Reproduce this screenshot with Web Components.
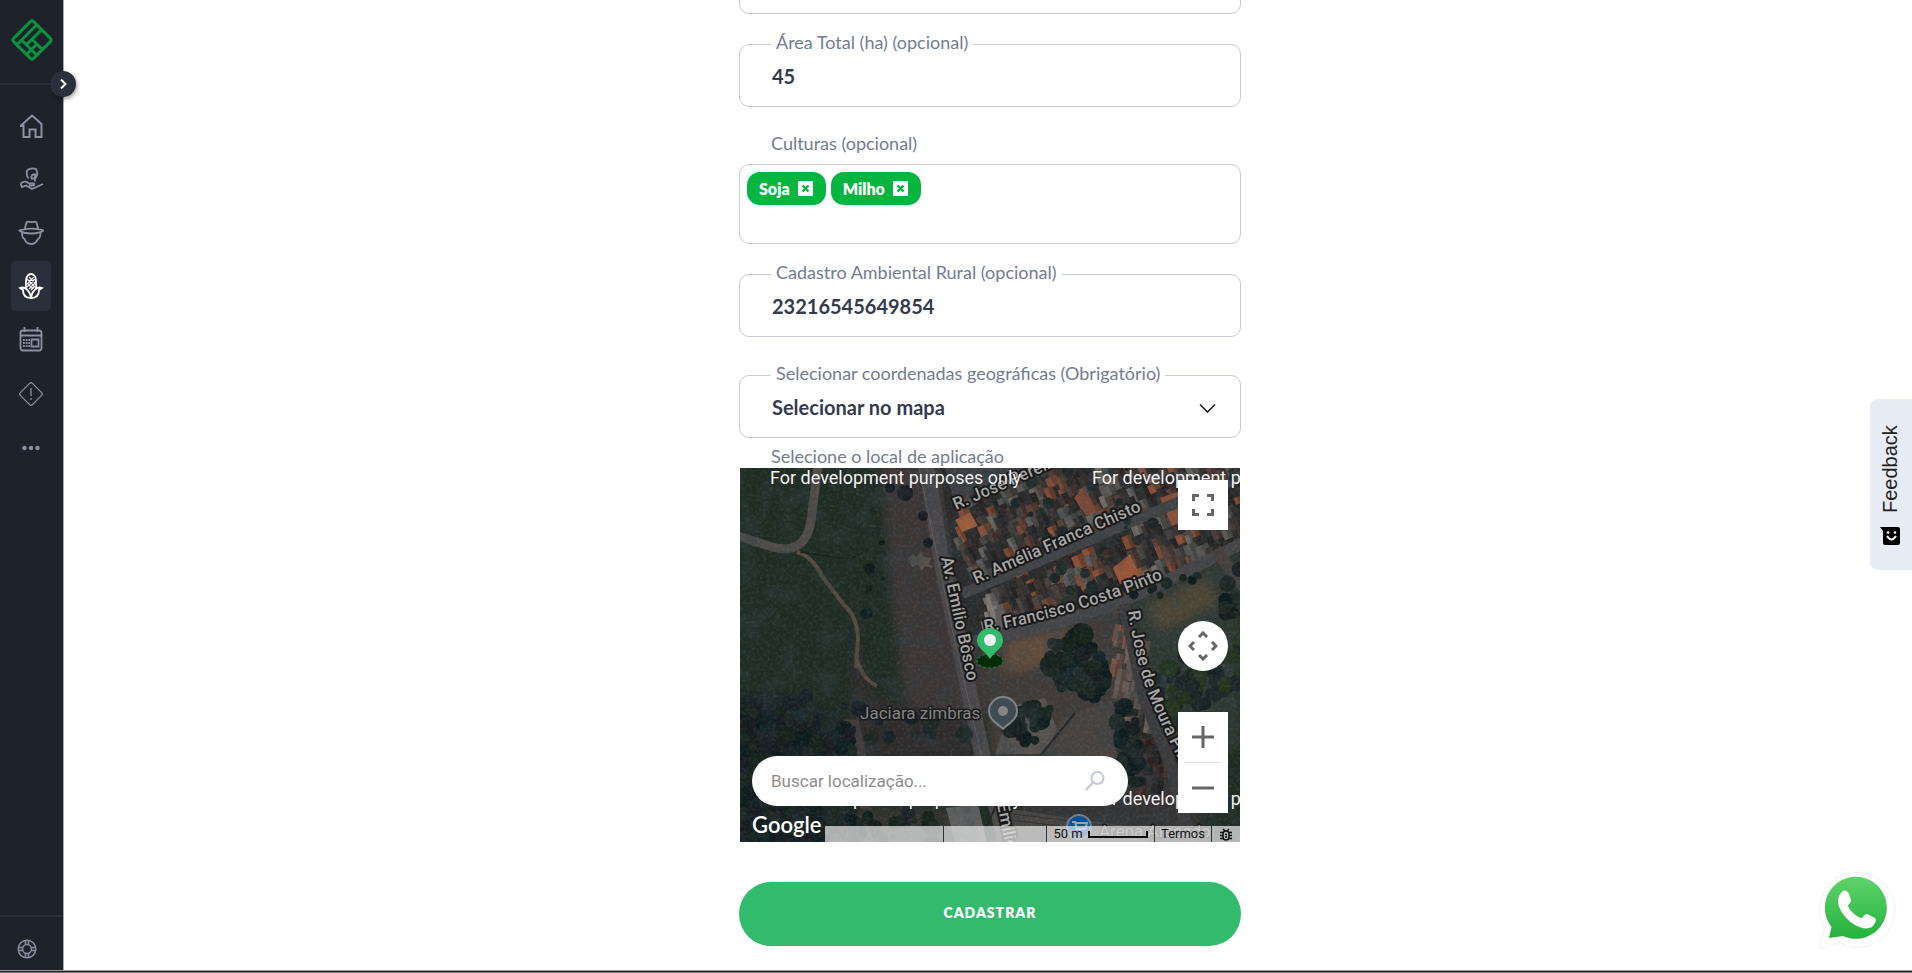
<!DOCTYPE html>
<html lang="pt-BR">
<head>
<meta charset="utf-8">
<meta name="viewport" content="width=device-width, initial-scale=1">
<title>Cadastro de propriedade</title>
<style>
  body { margin: 0; background: #fff; font-family: Lato, "Open Sans", sans-serif; color: #343b4f; }
</style>
</head>
<body>
<app-shell>
  <side-nav slot="nav"></side-nav>
  <property-form></property-form>
</app-shell>
<feedback-tab></feedback-tab>
<whatsapp-link></whatsapp-link>

<script>
const define = (name, html, setup) => {
  const tpl = document.createElement('template');
  tpl.innerHTML = '<style>*,*::before{box-sizing:border-box}</style>' + html;
  customElements.define(name, class extends HTMLElement {
    constructor() {
      super();
      this.attachShadow({ mode: 'open' }).append(tpl.content.cloneNode(true));
    }
    connectedCallback() { if (setup) setup(this, this.shadowRoot); }
  });
};

define('app-shell', `
<style>
  :host { display: grid; grid-template-columns: 64px 1fr; grid-template-rows: 1fr auto; height: 100vh; overflow: hidden; }
  main { padding-left: 4px; min-width: 0; overflow: hidden; }
  footer { grid-column: 1 / -1; height: 3px; background: #222; border-top: 1px solid #999; border-bottom: 1px solid #777; }
</style>
<slot name="nav"></slot>
<main><slot></slot></main>
<footer></footer>`);

define('nav-item', `
<style>
  :host { display: block; }
  a { display: grid; place-items: center; width: 40px; height: 50px; border-radius: 5px; color: #8b90a2; }
  :host([active]) a { background: #2b2f3b; color: #fff; }
  ::slotted(svg) { display: block; width: 26px; height: 30px; }
</style>
<a href="#"><slot></slot></a>`, (el, root) => {
  root.querySelector('a').setAttribute('aria-label', el.getAttribute('name'));
});

define('side-nav', `
<style>
  :host { display: flex; flex-direction: column; position: relative; z-index: 1; background: #1e222b; border-right: 1px solid #a5a7ab; }
  .logo { display: grid; place-items: center; height: 85px; padding: 0 0 3px; border-bottom: 2px solid #2a303d; }
  .logo svg { width: 44px; height: 44px; }
  nav { display: flex; flex-direction: column; gap: 4px; padding: 14px 11px; flex: 1; }
  .help { border-top: 2px solid #2a303d; height: 55px; padding: 22px 17px; color: #8b90a2; line-height: 0; }
  .help a { color: inherit; }
  .help svg { width: 20px; height: 20px; }
  button { position: absolute; right: -13px; top: 71px; width: 26px; height: 26px; padding: 0; border: 0; border-radius: 50%;
    background: #2b2f3b; box-shadow: 1px 2px 4px #0006; display: grid; place-items: center; }
  svg { fill: none; stroke: currentColor; stroke-width: 1.8; }
</style>
<a class="logo" href="#" aria-label="Início"><svg viewBox="0 0 42 42" style="stroke:#07943f;stroke-width:2.8;stroke-linejoin:round">
  <g transform="rotate(45 21 21)"><rect x="7.500" y="7.500" width="27" height="27" rx="2.500"/>
  <path d="M14 7.500V34.500M20.500 7.500V28M20.500 20.500H34.500M14 28H34.500M27 21V34.500"/></g></svg></a>
<nav aria-label="Menu">
  <nav-item name="Início"><svg viewBox="0 0 26 30" style="stroke-width:2"><path d="M2.500 17 14 6.500 18 10M18 10 23.500 15V28H17.500V20.500H11.500V28H5.500V15.500M2 17H6"/></svg></nav-item>
  <nav-item name="Cultivo"><svg viewBox="0 0 26 30"><path d="M10.500 15.500C8.500 13 8 8 9.500 7c2-1.500 6-2 8.500-1 2.500 4 1 8-1.500 10M17 18.500v-7c-3-.5-4 1.500-3.500 4h3M2.500 20.500c4-3 6-2 8.500 0h5c1 2-1 2.500-5 2M2.500 20.500 4 24l4-1.500 6 3.500 11-5"/></svg></nav-item>
  <nav-item name="Produtores"><svg viewBox="0 0 26 30"><path d="M6.500 13 8.500 5.500C10 3 12 6 13.500 5c2 1 3-2 5 .5L20.500 13M1.500 13.500c6-2.500 18-2.500 24 0-3 2.500-8 3-12 3s-9-.5-12-3zM4 16c0 3 .5 5 2.500 6 1 3 4 5 7 5s5-2 6.500-5c2-1 2.500-3 2.500-6"/></svg></nav-item>
  <nav-item name="Propriedades" active><svg viewBox="0 0 26 30"><path d="M8 17V10c0-4 2-7 5-7s5 3 5 7v7M13 27c-6 0-8-4-8-8l-3-2c5-2 10 3 11 9 1-6 6-11 11-9l-3 2c0 4-2 8-8 8M13 27V23"/><path d="m9 8 8 8M9 12l6 6M9 16l8-8M11 6l6 6M10 12l6-6M11 18l6-6M13 19l4-4" style="stroke-width:1.200"/></svg></nav-item>
  <nav-item name="Agenda"><svg viewBox="0 0 26 30"><rect x="2.500" y="5.500" width="21" height="20" rx="2.500"/><path d="M2.500 10.500h21M6.500 2v5M19.500 2v5M13.500 14.500h7v7h-7z"/><path d="M5 15h7M5 18h7M5 21h7" style="stroke-dasharray:1.800 .9"/></svg></nav-item>
  <nav-item name="Alertas"><svg viewBox="0 0 26 30" style="stroke-width:1.300"><rect x="4.500" y="6.500" width="17" height="17" rx="2" transform="rotate(45 13 15)"/><path d="M13 9v8M13 19v2"/></svg></nav-item>
  <nav-item name="Mais"><svg viewBox="0 0 26 30" style="fill:currentColor;stroke:none"><circle cx="6.500" cy="15" r="2.200"/><circle cx="13" cy="15" r="2.200"/><circle cx="19.500" cy="15" r="2.200"/></svg></nav-item>
</nav>
<div class="help"><a href="#" aria-label="Ajuda"><svg viewBox="0 0 20 20" style="stroke-width:1.500"><circle cx="10" cy="10" r="8.800"/><circle cx="10" cy="10" r="4.500"/><path d="M8.500 1.500v4M11.500 1.500v4M8.500 14.500v4M11.500 14.500v4M1.500 8.500h4M1.500 11.500h4M14.500 8.500h4M14.500 11.500h4"/></svg></a></div>
<button type="button" aria-label="Expandir menu"><svg width="12" height="12" viewBox="0 0 12 12" style="stroke:#fff;stroke-width:2"><path d="m4 1.500 4.500 4.500L4 10.500"/></svg></button>`);

const FIELD = `
  :host { display: block; position: relative; }
  label { position: absolute; left: 32px; top: -13px; padding: 0 5px; background: #fff; font-size: 18px; line-height: 22px; color: #737c95; white-space: nowrap; }
  .box { display: flex; height: 63px; border: 1px solid #c7cad9; border-radius: 10px; }
  input, select { flex: 1; min-width: 0; border: 0; outline: 0; background: none; padding: 0 32px; appearance: none;
    font: 700 20px/24px Lato, sans-serif; color: #343b4f; border-radius: 10px; }`;

define('text-field', `<style>${FIELD}</style>
<div class="box"><input id="f" type="text"></div><label for="f"></label>`, (el, root) => {
  const label = root.querySelector('label'), input = root.querySelector('input');
  label.textContent = el.getAttribute('label');
  input.value = el.getAttribute('value');
});

define('select-field', `<style>${FIELD}
  svg { position: absolute; right: 25px; top: 28px; pointer-events: none; }
</style>
<div class="box"><select id="f"><option></option></select></div><label for="f"></label>
<svg width="17" height="11" viewBox="0 0 17 11" fill="none" stroke="#222" stroke-width="1.600"><path d="m1 1.500 7.500 7.500L16 1.500"/></svg>`, (el, root) => {
  root.querySelector('label').textContent = el.getAttribute('label');
  root.querySelector('option').textContent = el.getAttribute('value');
});

define('culture-tag', `
<style>
  :host { display: flex; align-items: center; gap: 8px; height: 33px; padding: 0 13px 0 12px; border-radius: 13px; background: #04b640;
    color: #fff; font: 800 16px/20px Lato, sans-serif; }
  button { display: block; width: 15px; height: 15px; padding: 0; border: 0; background: #fff; }
  svg { display: block; }
</style>
<slot></slot><button type="button" aria-label="Remover"><svg width="15" height="15" viewBox="0 0 15 15" stroke="#04b640" stroke-width="2.400"><path d="m4.500 4.500 6 6M10.500 4.500l-6 6"/></svg></button>`);

define('map-view', `
<style>
  :host { display: block; position: relative; height: 374px; margin: 0 1px; overflow: hidden; background: #242a28; font-family: Roboto, sans-serif; }
  .scene { position: absolute; inset: 0; width: 100%; height: 100%; }
  .scene text { font: 500 17px Roboto, sans-serif; fill: #a7a7a7; stroke: #191919; stroke-width: 4px; paint-order: stroke; stroke-linejoin: round; }
  .scene .wm { font-weight: 400; font-size: 18px; fill: #f4f4f4; stroke: #2225; stroke-width: 1px; }
  .scene .poi { font-weight: 400; fill: #858585; stroke-width: 3px; }
  button { position: absolute; display: grid; place-items: center; padding: 0; border: 0; background: #fff; }
  .full, .pan { right: 12px; width: 50px; height: 50px; }
  .full { top: 12px; }
  .pan { top: 153px; border-radius: 50%; }
  .zoom { position: absolute; right: 12px; top: 244px; width: 50px; background: #fff; }
  .zoom button { position: static; width: 50px; height: 50px; }
  .zoom hr { margin: 0 6px; border: 0; height: 1px; background: #e2e2e2; }
  .search { position: absolute; left: 12px; right: 112px; bottom: 36px; height: 50px; border-radius: 25px; background: #fff;
    display: flex; align-items: center; padding: 0 23px 0 19px; }
  .search input { flex: 1; min-width: 0; border: 0; outline: 0; padding: 0; background: none; font: 17px/20px Roboto, sans-serif; }
  .search input::placeholder { color: #8d8d8d; opacity: 1; }
  .google { position: absolute; left: 12px; bottom: 3px; color: #fff; font: 600 22px/28px Lato, sans-serif; }
  .legal { position: absolute; left: 85px; right: 0; bottom: 0; height: 16px; display: grid; grid-template-columns: 118px 103px 108px 57px 1fr;
    background: #e9e9e9b8; font: 13px/16px Roboto, sans-serif; color: #111; }
  .legal > * { border-left: 1px solid #333; display: flex; align-items: center; justify-content: center; gap: 5px; color: inherit; text-decoration: none; }
  .legal > :first-child { border-left: 0; }
  .legal i { width: 60px; height: 7px; border: 2px solid #111; border-top: 0; }
</style>
<svg class="scene" viewBox="0 0 500 374" preserveAspectRatio="xMidYMid slice" aria-label="Mapa de satélite"></svg>
<button class="full" type="button" aria-label="Tela cheia"><svg width="24" height="24" viewBox="0 0 24 24" fill="none" stroke="#666" stroke-width="3"><path d="M2.500 8V2.500H8M16 2.500h5.500V8M21.500 16v5.500H16M8 21.500H2.500V16"/></svg></button>
<button class="pan" type="button" aria-label="Mover"><svg width="30" height="30" viewBox="0 0 30 30" fill="none" stroke="#666" stroke-width="3"><path d="m11 6 4-4 4 4M24 11l4 4-4 4M19 24l-4 4-4-4M6 19l-4-4 4-4"/></svg></button>
<div class="zoom"><button type="button" aria-label="Aproximar"><svg width="22" height="22" viewBox="0 0 22 22" stroke="#666" stroke-width="3"><path d="M11 0v22M0 11h22"/></svg></button><hr>
<button type="button" aria-label="Afastar"><svg width="22" height="22" viewBox="0 0 22 22" stroke="#666" stroke-width="3"><path d="M0 11h22"/></svg></button></div>
<span class="google">Google</span>
<div class="legal"><span></span><span></span><span>50 m<i></i></span><a href="#">Termos</a><a href="#" aria-label="Informar erro"><svg width="12" height="13" viewBox="0 0 12 13" fill="none" stroke="#111" stroke-width="1.500"><rect x="3" y="3" width="6" height="9" rx="3"/><path d="M3 1l2 2M9 1 7 3M0 4.500h3M0 7.500h3M0 10.500h3M9 4.500h3M9 7.500h3M9 10.500h3M5 6.500h2M5 9h2"/></svg></a></div>
<div class="search"><input type="search" placeholder="Buscar localização..." aria-label="Buscar localização">
<svg width="20" height="20" viewBox="0 0 20 20" fill="none" stroke="#c5cada" stroke-width="2"><circle cx="12.500" cy="7" r="6"/><path d="M8 11.500.8 19" stroke-width="2.400"/></svg></div>`,
(el, root) => {
  // Seeded generator, so roofs and trees fall in the same places on every load.
  let seed = 71;
  const rnd = () => (seed = (seed * 16807) % 2147483647) / 2147483647;
  const pick = a => a[Math.floor(rnd() * a.length)];
  const inside = (x, y, p) => {
    let c = false;
    for (let i = 0, j = p.length - 1; i < p.length; j = i++)
      if ((p[i][1] > y) !== (p[j][1] > y) && x < (p[j][0] - p[i][0]) * (y - p[i][1]) / (p[j][1] - p[i][1]) + p[i][0]) c = !c;
    return c;
  };
  const roofs = (poly, angle, colors, step = 10) => {
    let s = '';
    const xs = poly.map(p => p[0]), ys = poly.map(p => p[1]);
    for (let y = Math.min(...ys); y < Math.max(...ys); y += step)
      for (let x = Math.min(...xs); x < Math.max(...xs); x += step) {
        if (!inside(x, y, poly)) continue;
        const w = (6 + rnd() * 8).toFixed(1), h = (7 + rnd() * 14).toFixed(1), c = pick(colors);
        const px = (x + rnd() * 6).toFixed(1), py = (y + rnd() * 6).toFixed(1);
        s += `<g transform="translate(${px} ${py}) rotate(${angle})"><path d="M0 0h${w}v${h}h-${w}z" fill="${c}"/><path d="M${w / 2} 0h${w / 2}v${h}h-${w / 2}z" fill="#000" opacity=".22"/></g>`;
      }
    return s;
  };
  const trees = (poly, n, colors, r) => {
    let s = '';
    const xs = poly.map(p => p[0]), ys = poly.map(p => p[1]);
    for (let i = 0; i < n; i++) {
      const x = Math.min(...xs) + rnd() * (Math.max(...xs) - Math.min(...xs));
      const y = Math.min(...ys) + rnd() * (Math.max(...ys) - Math.min(...ys));
      if (inside(x, y, poly)) s += `<circle cx="${x.toFixed(1)}" cy="${y.toFixed(1)}" r="${(r * (.4 + rnd() * .8)).toFixed(1)}" fill="${pick(colors)}"/>`;
    }
    return s;
  };
  const town = ['#7d4934', '#8a5039', '#4b3d39', '#38302f', '#5a5856', '#6e6964', '#2d2a2b', '#3a302d', '#5a4138', '#2e2d2f', '#292b2c', '#4a4341'];
  const dark = ['#141d1f', '#17211f', '#111a1d', '#1b2822'];
  root.querySelector('.scene').innerHTML = `
  <defs>
    <filter id="grain" x="0" y="0" width="100%" height="100%"><feTurbulence type="fractalNoise" baseFrequency=".3" numOctaves="3" seed="8"/>
      <feColorMatrix values="0 0 0 0 .5  0 0 0 0 .48  0 0 0 0 .46  1.800 0 0 0 -.78"/></filter>
    <filter id="shade" x="0" y="0" width="100%" height="100%"><feTurbulence type="fractalNoise" baseFrequency=".05" numOctaves="5" seed="3"/>
      <feColorMatrix values="0 0 0 0 .03  0 0 0 0 .05  0 0 0 0 .06  0 1.800 0 0 -.75"/></filter>
    <filter id="soft"><feGaussianBlur stdDeviation="5"/></filter>
    <filter id="edge"><feGaussianBlur stdDeviation=".5"/></filter>
    <path id="chisto" d="M236 116 412 38"/><path id="pinto" d="M245 164Q345 146 436 105"/>
    <path id="bosco" d="M201 90 231 230"/><path id="moura" d="M388 143Q396 196 409 228T455 324"/>
    <path id="pereira" d="M216 42 330-8"/><path id="emilio" d="M257 336 270 400"/>
  </defs>
  <rect width="500" height="375" fill="#1f2c24"/>
  <g filter="url(#soft)">
    <path d="M140-10H200L250 240 210 280 165 240 150 120Z" fill="#3b3434"/>
    <path d="M115 170 135 230 230 250 235 290 100 290 110 250Z" fill="#2e2b2a"/>
    <path d="M-10 228 60 232 105 255 115 300 110 380H-10Z" fill="#141c20"/>
    <path d="M110 340H220V380H90Z" fill="#33302f"/>
    <path d="M240 165 375 135 395 225 370 290 250 290Z" fill="#403b39"/>
    <path d="M268 175 330 160 310 195 265 205Z" fill="#634d3e"/>
    <path d="M380 120 500 78V280H430Z" fill="#2f3831"/>
    <path d="M405 140 465 108 480 135 420 165Z" fill="#4c4536"/>
    <path d="M365 280 440 270 470 380H280V330Z" fill="#363131"/>
  </g>
  <g filter="url(#edge)">
  <path d="M200 0H500V75L330 145 225 172Z" fill="#2c2a2b"/>
  ${roofs([[203, 18], [262, -12], [505, -12], [478, 8], [400, 36], [232, 108], [216, 98]], -24, town)}
  ${roofs([[240, 120], [410, 48], [505, 8], [500, 62], [420, 98], [240, 148]], -22, town)}
  ${roofs([[232, 125], [253, 118], [252, 153], [235, 158]], -14, ['#6e6d6c', '#5b5a5a', '#7a7774'], 8)}
  ${roofs([[362, 138], [385, 130], [408, 248], [377, 250]], 10, ['#7b5345', '#6a5a54', '#4b3e3c', '#5d5250'])}
  ${roofs([[390, 255], [425, 262], [432, 290], [400, 312]], 8, ['#3a2827', '#46332f', '#282826'])}
  <path d="M205 0 300-2 270 12 214 32Z" fill="#3d3e42"/>
  <path d="M420 30 448 20 460 46 432 58Z" fill="#8a5039"/><path d="M215 52 230 44 238 58 222 64Z" fill="#9a5a3c"/>
  <path d="M373 100 390 86 400 108 380 116Z" fill="#965538"/><path d="M334 30 344 18 356 42 346 48Z" fill="#7d4934"/>
  <path d="M186-5 203 100 222 190 243 290 268 380" fill="none" stroke="#48474a" stroke-width="16"/>
  <path d="M178-5 213 165 250 325" fill="none" stroke="#625c58" stroke-width="1"/>
  <path d="M222 126 400 50 505 7" fill="none" stroke="#424245" stroke-width="11"/>
  <path d="M224 176Q345 153 420 116T505 74" fill="none" stroke="#454446" stroke-width="12"/>
  <path d="M384 136 404 230 432 300 452 380" fill="none" stroke="#3a3a3c" stroke-width="12"/>
  <path d="M420 245Q435 210 500 185" fill="none" stroke="#45413f" stroke-width="9"/>
  <path d="M475 82 505 120" stroke="#45413f" stroke-width="12"/>
  <path d="M-2 68 32 79Q65 88 71 53L78-3" fill="none" stroke="#504b48" stroke-width="9"/>
  <path d="M57 84Q72 88 82 108L104 137Q117 148 118 170L116 200M116 186Q120 210 137 218" fill="none" stroke="#55493f" stroke-width="4"/>
  <path d="M60 84 110 91 130 80" fill="none" stroke="#182019" stroke-width="1.500"/>
  <path d="M104 256h11l8 36 2 34-34 14M91 340l10-6 30 3" fill="none" stroke="#403b3a" stroke-width="9"/>
  <path d="M272 238 305 230 318 264 300 286 255 286Z" fill="#56514f"/>
  <path d="M322 250 372 232 377 290H304Z" fill="#464240"/>
  <path d="M300 288 335 245M240 374 260 328" stroke="#252425" stroke-width="2"/>
  <path d="M263 340 400 360 410 374H255Z" fill="#484543"/><path d="M206 340 238 336 247 374H215Z" fill="#5f5e5e"/>
  <path d="M264 345 405 362M262 351 405 368" stroke="#33302f"/>
  ${trees([[0, 230], [110, 258], [118, 375], [0, 375]], 170, dark, 9)}
  ${trees([[130, 20], [142, 20], [150, 140], [125, 150]], 24, dark, 5)}
  ${trees([[30, 220], [180, 250], [240, 260], [220, 282], [80, 270]], 60, ['#161d23', '#182226', '#1c2723'], 8)}
  ${trees([[308, 176], [345, 164], [368, 200], [362, 232], [310, 220]], 90, dark, 9)}
  ${trees([[265, 250], [290, 234], [312, 238], [300, 270], [268, 285]], 60, dark, 8)}
  ${trees([[376, 236], [395, 238], [402, 320], [380, 316]], 50, dark, 7)}
  ${trees([[412, 200], [450, 170], [500, 165], [500, 240], [450, 245], [430, 270]], 90, ['#172122', '#1b2625', '#22301f'], 8)}
  ${trees([[482, 115], [500, 100], [500, 150], [485, 150]], 20, dark, 7)}
  ${trees([[110, 345], [190, 340], [200, 375], [100, 375]], 30, dark, 7)}
  ${trees([[380, 128], [470, 100], [470, 108], [390, 150]], 30, dark, 5)}
  ${trees([[240, 0], [500, 0], [490, 70], [300, 145]], 45, ['#1a2526', '#1d2a25'], 5)}
  <circle cx="165" cy="25" r="8" fill="#161c22"/><circle cx="183" cy="48" r="5" fill="#161c22"/><circle cx="188" cy="75" r="5" fill="#161c22"/><circle cx="150" cy="20" r="5" fill="#161c22"/>
  <path d="m168 90 5-4 3 3 5-5 3 5 7 1-2 6 4 4-8-2-3 4-4-5-6 2z" fill="#6a6561" opacity=".6"/>
  </g>
  <rect width="500" height="375" filter="url(#shade)" opacity=".55"/>
  <rect width="500" height="375" filter="url(#grain)" opacity=".14"/>
  <text><textPath href="#pereira">R. José Pereira</textPath></text>
  <text><textPath href="#chisto">R. Amélia Franca Chisto</textPath></text>
  <text><textPath href="#pinto">R. Francisco Costa Pinto</textPath></text>
  <text><textPath href="#bosco">Av. Emílio Bôsco</textPath></text>
  <text><textPath href="#moura">R. Jose de Moura Pinto</textPath></text>
  <text><textPath href="#emilio">Emílio</textPath></text>
  <text class="poi" x="120" y="251">Jaciara zimbras</text>
  <path d="M263 261c-4-5-14-8-14-18a14 14 0 0 1 28 0c0 10-10 13-14 18z" fill="#3f4b53" stroke="#7e8487" stroke-width="2"/><circle cx="263" cy="243" r="5" fill="#858585"/>
  <circle cx="339" cy="359" r="12" fill="#0d5394" stroke="#6e8290" stroke-width="2"/><path d="M332 354h3l2 7h8l2-6h-11" fill="none" stroke="#92a6b5" stroke-width="2"/>
  <text class="poi" x="359" y="369">Arena Arecado</text>
  <text class="wm" x="30" y="16">For development purposes only</text><text class="wm" x="352" y="16">For development purposes only</text>
  <text class="wm" x="30" y="337">For development purposes only</text><text class="wm" x="352" y="337">For development purposes only</text>
  <ellipse cx="250" cy="193" rx="13" ry="7" fill="#022c0a" stroke="#248a48" stroke-dasharray="3 2"/>
  <path d="M250 191c-4-7-13-11-13-18a13 13 0 0 1 26 0c0 7-9 11-13 18z" fill="#32bb6c"/><circle cx="250" cy="172" r="6" fill="#f1f1f1"/>`;
});

define('property-form', `
<style>
  :host { display: block; width: 100%; max-width: 502px; margin: 0 auto; }
  form { display: flex; flex-direction: column; margin-top: -49px; }
  text-field, .group { margin-bottom: 30px; }
  select-field { margin: 8px 0 6px; }
  .caption { display: block; margin: 0 32px; font-size: 18px; line-height: 24px; color: #737c95; }
  .group { margin-top: -6px; }
  .group .caption { margin-bottom: 9px; }
  .tags { display: flex; align-items: flex-start; gap: 5px; height: 80px; padding: 7px; border: 1px solid #c7cad9; border-radius: 10px; }
  .submit { height: 64px; margin-top: 40px; border: 0; border-radius: 32px; background: #32bb6c; color: #fff;
    font: 800 14px/18px Lato, sans-serif; letter-spacing: 1px; padding-bottom: 4px; }
</style>
<form>
  <text-field label="Nome" value=""></text-field>
  <text-field label="Área Total (ha) (opcional)" value="45"></text-field>
  <div class="group" role="group" aria-labelledby="cult"><span class="caption" id="cult">Culturas (opcional)</span>
    <div class="tags"><culture-tag>Soja</culture-tag><culture-tag>Milho</culture-tag></div></div>
  <text-field label="Cadastro Ambiental Rural (opcional)" value="23216545649854"></text-field>
  <select-field label="Selecionar coordenadas geográficas (Obrigatório)" value="Selecionar no mapa"></select-field>
  <span class="caption">Selecione o local de aplicação</span>
  <map-view></map-view>
  <button class="submit" type="submit">CADASTRAR</button>
</form>`);

define('feedback-tab', `
<style>
  :host { position: fixed; right: 0; top: 399px; z-index: 2; }
  button { display: flex; align-items: center; gap: 14px; width: 42px; height: 171px; padding: 25px 6px 25px 8px; border: 0; border-radius: 0 8px 8px 0;
    background: #e7ecf4; color: #222; writing-mode: vertical-rl; transform: rotate(180deg); font: 20px/24px "Liberation Sans", Arial, sans-serif; }
  svg { display: block; width: 20px; height: 18px; transform: rotate(180deg); }
</style>
<button type="button"><svg viewBox="0 0 20 18"><path d="M0 0H18q2 0 2 2V16q0 2-2 2H5q-2 0-2-2V4Z" fill="#000"/><path d="M7 9q4.500 7 9 0" fill="none" stroke="#fff" stroke-width="2"/><circle cx="8" cy="5.500" r="1.300" fill="#fff"/><circle cx="15" cy="5.500" r="1.300" fill="#fff"/></svg>Feedback</button>`);

define('whatsapp-link', `
<style>
  :host { position: fixed; right: 17px; bottom: 24px; z-index: 2; line-height: 0; filter: drop-shadow(0 0 1px #0002); }
</style>
<a href="#" aria-label="WhatsApp"><svg width="76" height="76" viewBox="0 0 76 76">
<defs><linearGradient id="g" x2="0" y2="1"><stop stop-color="#5fd36b"/><stop offset="1" stop-color="#24b23e"/></linearGradient></defs>
<path d="M1 75 6 55A37 37 0 1 1 20 69Z" fill="#fff"/>
<path d="M10 65 12.500 54A31 31 0 1 1 24 63Z" fill="url(#g)"/>
<path d="M22 20c3-4 6-3 8 1l2 6c0 3-3 4-3 6 3 6 8 10 13 12 2 0 3-4 6-4l8 4c2 2 0 6-3 9-4 2-9 2-15-1C28 48 20 38 19 29c0-4 1-7 3-9z" fill="#fff"/></svg></a>`);
</script>
</body>
</html>
